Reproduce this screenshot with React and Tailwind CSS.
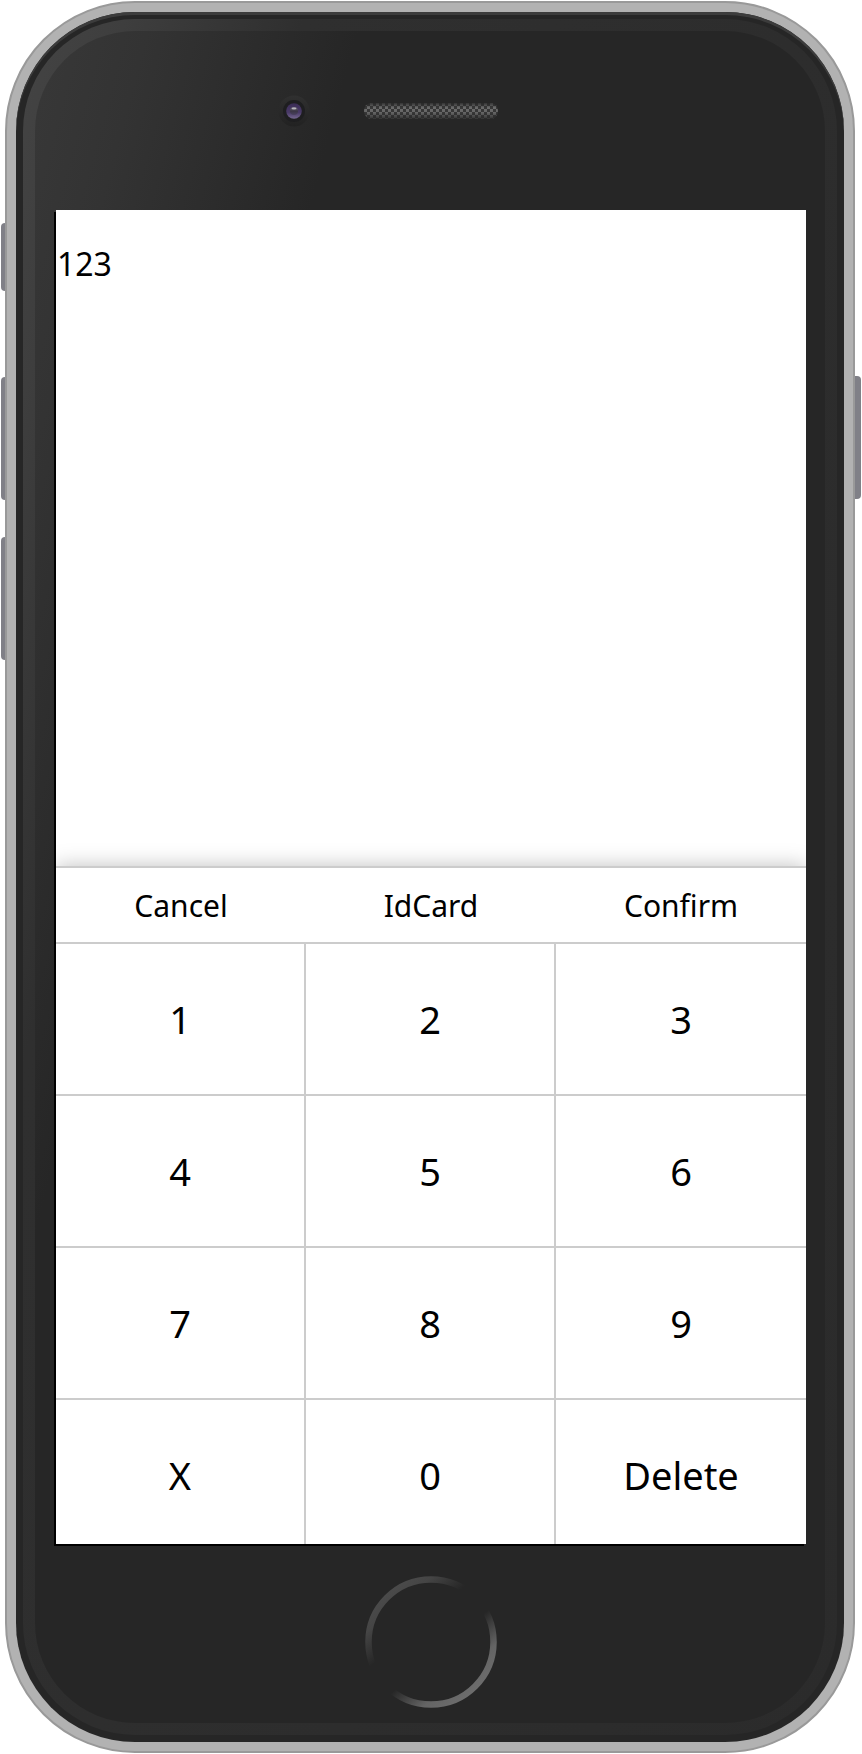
const actions = ["Cancel", "IdCard", "Confirm"];
const keys = ["1", "2", "3", "4", "5", "6", "7", "8", "9", "X", "0", "Delete"];

function Camera() {
  return (
    <svg className="h-8 w-8 shrink-0" viewBox="0 0 32 32" aria-hidden="true">
      <defs>
        <linearGradient id="camRim" x1="0" y1="0" x2="0" y2="1">
          <stop offset="0" stopColor="#303030" />
          <stop offset="1" stopColor="#222222" />
        </linearGradient>
        <linearGradient id="camLens" x1="0" y1="0" x2="0" y2="1">
          <stop offset="0" stopColor="#3a2c55" />
          <stop offset="0.6" stopColor="#4a3a68" />
          <stop offset="1" stopColor="#75688f" />
        </linearGradient>
        <linearGradient id="camPupil" x1="0" y1="0" x2="0" y2="1">
          <stop offset="0" stopColor="#77737f" />
          <stop offset="0.5" stopColor="#3a3544" />
          <stop offset="1" stopColor="#4a4160" />
        </linearGradient>
      </defs>
      <circle cx="16" cy="16" r="15.5" fill="url(#camRim)" />
      <circle cx="16" cy="16" r="11" fill="#1e1e20" />
      <circle cx="16" cy="16" r="7.8" fill="url(#camLens)" />
      <circle cx="16" cy="16" r="4" fill="url(#camPupil)" />
      <ellipse cx="16" cy="13.5" rx="2.4" ry="1" fill="#b7b4bd" />
    </svg>
  );
}

function Speaker() {
  return (
    <svg className="h-4 w-[134px] shrink-0" viewBox="0 0 134 16" aria-hidden="true">
      <defs>
        <pattern id="mesh" width="6" height="6" patternUnits="userSpaceOnUse">
          <rect width="6" height="6" fill="#383838" />
          <rect width="3" height="3" fill="#6c6c6c" />
          <rect x="3" y="3" width="3" height="3" fill="#6c6c6c" />
        </pattern>
        <linearGradient id="meshShade" x1="0" y1="0" x2="0" y2="1">
          <stop offset="0" stopColor="#262626" stopOpacity="0.8" />
          <stop offset="0.3" stopColor="#262626" stopOpacity="0" />
          <stop offset="0.6" stopColor="#262626" stopOpacity="0.1" />
          <stop offset="1" stopColor="#262626" stopOpacity="0.8" />
        </linearGradient>
      </defs>
      <rect width="134" height="16" rx="8" fill="url(#mesh)" />
      <rect width="134" height="16" rx="8" fill="url(#meshShade)" />
    </svg>
  );
}

function HomeRing() {
  return (
    <svg className="h-full w-full" viewBox="0 0 132 132" aria-hidden="true">
      <defs>
        <linearGradient id="ring" gradientUnits="userSpaceOnUse" x1="24" y1="17" x2="108" y2="115">
          <stop offset="0" stopColor="#4a4a4a" />
          <stop offset="0.12" stopColor="#454545" />
          <stop offset="0.34" stopColor="#262626" />
          <stop offset="0.6" stopColor="#262626" />
          <stop offset="0.84" stopColor="#646464" />
          <stop offset="1" stopColor="#6c6c6c" />
        </linearGradient>
      </defs>
      <circle cx="66" cy="66" r="62.5" fill="none" stroke="url(#ring)" strokeWidth="6.5" />
    </svg>
  );
}

export default function App() {
  return (
    <main className="min-h-screen bg-white py-px pr-[7px] pl-[5px] font-['Noto_Sans','Open_Sans',sans-serif] text-black">
      <div className="relative mx-auto max-w-[850px]">
        <span className="absolute top-[222px] -left-1 h-[68px] w-2 rounded-l bg-[#808087]" />
        <span className="absolute top-[376px] -left-1 h-[123px] w-2 rounded-l bg-[#808087]" />
        <span className="absolute top-[536px] -left-1 h-[123px] w-2 rounded-l bg-[#808087]" />
        <span className="absolute top-[375px] -right-1.5 h-[123px] w-2 rounded-r bg-[#808087]" />

        <div className="relative rounded-[130px] border-2 border-[#999999] bg-[#b2b2b2] p-[9px]">
          <div className="rounded-[119px] bg-[#262626] p-[7px] shadow-[inset_0_3px_0_#3c3c3c]">
            <div className="rounded-[112px] bg-[linear-gradient(105deg,#444444_0%,#3e3e3e_8%,#2f2f2f_22%,#2b2b2b_100%)] p-3">
              <div className="rounded-[100px] bg-[linear-gradient(105deg,#383838_0%,#333333_9%,#262626_26%)] pr-[19px] pl-[21px]">
                <header className="flex h-[179px] items-center justify-center gap-[54px] pb-5">
                  <Camera />
                  <Speaker />
                  <span className="w-8" />
                </header>

                <section className="flex aspect-[750/1334] w-full flex-col overflow-hidden bg-white shadow-[-2px_2px_0_#000000]">
                  <output className="block min-h-0 flex-1 px-px pt-8 text-[32px] leading-[44px]">123</output>

                  <div className="relative -mb-2 shrink-0 border-t-2 border-[#cccccc] bg-white shadow-[0_0_20px_rgba(0,0,0,0.25)]">
                    <div className="grid h-[76px] grid-cols-3 border-b-2 border-[#cccccc] text-[30px]">
                      {actions.map((label) => (
                        <button key={label} type="button" className="flex items-center justify-center">
                          {label}
                        </button>
                      ))}
                    </div>
                    <div className="grid grid-cols-3 text-[38px]">
                      {keys.map((label) => (
                        <button
                          key={label}
                          type="button"
                          className="flex h-38 items-center justify-center border-r-2 border-b-2 border-[#cccccc] nth-[3n]:border-r-0"
                        >
                          {label}
                        </button>
                      ))}
                    </div>
                  </div>
                </section>

                <footer className="flex justify-center pt-8 pb-[15px]">
                  <button type="button" aria-label="Home" className="h-[132px] w-[132px] rounded-full">
                    <HomeRing />
                  </button>
                </footer>
              </div>
            </div>
          </div>
        </div>
      </div>
    </main>
  );
}
